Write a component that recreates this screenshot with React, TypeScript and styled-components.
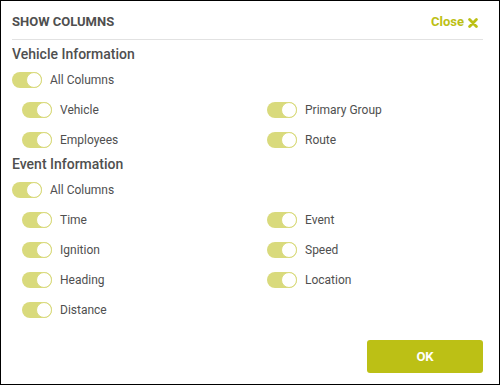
import React from "react";
import styled, { createGlobalStyle } from "styled-components";

const Global = createGlobalStyle`
  html, body { margin: 0; padding: 0; background: #fff; }
  body { font-family: Roboto, "Liberation Sans", Arial, sans-serif; }
  * { box-sizing: border-box; }
`;

const ACCENT = "#bcc015";
const TRACK = "#d9da7c";
const TEXT = "#4f4f4f";

const Frame = styled.div`
  width: 500px;
  height: 385px;
  border: 1px solid #000;
  background: #fff;
  padding: 0 16px 0 11px;
  display: flex;
  flex-direction: column;
`;

const Header = styled.div`
  display: flex;
  align-items: center;
  justify-content: space-between;
  padding: 13px 0 9px 0;
  border-bottom: 1px solid #e2e2e2;
  margin-bottom: 5px;
`;

const Title = styled.div`
  font-size: 13px;
  line-height: 16px;
  font-weight: 700;
  color: ${TEXT};
`;

const CloseButton = styled.button`
  border: none;
  background: none;
  padding: 0 5px 0 0;
  margin: 0;
  display: flex;
  align-items: center;
  gap: 4px;
  font-family: inherit;
  font-size: 13px;
  line-height: 16px;
  font-weight: 700;
  color: ${ACCENT};
  cursor: pointer;
`;

const CloseIcon = styled.svg`
  width: 10px;
  height: 10px;
  margin-top: 1px;
`;

const SectionTitle = styled.div`
  font-size: 14px;
  line-height: 18px;
  font-weight: 500;
  color: ${TEXT};
  margin-bottom: 2px;
`;

const Row = styled.div<{ $indent?: boolean }>`
  display: flex;
  align-items: center;
  gap: 8px;
  height: 30px;
  padding-left: ${(p) => (p.$indent ? "10px" : "0")};
`;

const Grid = styled.div`
  display: grid;
  grid-template-columns: 245px 1fr;
`;

const Track = styled.span`
  position: relative;
  width: 30px;
  height: 16px;
  border-radius: 8px;
  background: ${TRACK};
  flex: none;
`;

const Knob = styled.span`
  position: absolute;
  right: 0;
  top: 0;
  width: 16px;
  height: 16px;
  border-radius: 50%;
  background: #fff;
  border: 1.5px solid ${TRACK};
`;

const Label = styled.span`
  font-size: 12px;
  line-height: 14px;
  color: ${TEXT};
`;

const Footer = styled.div`
  margin-top: auto;
  display: flex;
  justify-content: flex-end;
  padding-bottom: 11px;
`;

const OkButton = styled.button`
  width: 116px;
  height: 33px;
  border: none;
  border-radius: 3px;
  background: ${ACCENT};
  color: #fff;
  font-family: inherit;
  font-size: 13px;
  font-weight: 700;
  cursor: pointer;
`;

const Toggle = () => (
  <Track>
    <Knob />
  </Track>
);

const Item = ({ label, indent }: { label: string; indent?: boolean }) => (
  <Row $indent={indent}>
    <Toggle />
    <Label>{label}</Label>
  </Row>
);

const Section = ({ title, items }: { title: string; items: string[] }) => (
  <>
    <SectionTitle>{title}</SectionTitle>
    <Item label="All Columns" />
    <Grid>
      {items.map((i) => (
        <Item key={i} label={i} indent />
      ))}
    </Grid>
  </>
);

export default function App() {
  return (
    <>
      <Global />
      <Frame>
        <Header>
          <Title>SHOW COLUMNS</Title>
          <CloseButton>
            Close
            <CloseIcon viewBox="0 0 10 10">
              <path
                d="M1.6 1.6 L8.4 8.4 M8.4 1.6 L1.6 8.4"
                stroke={ACCENT}
                strokeWidth="2.8"
                strokeLinecap="round"
                fill="none"
              />
            </CloseIcon>
          </CloseButton>
        </Header>
        <Section
          title="Vehicle Information"
          items={["Vehicle", "Primary Group", "Employees", "Route"]}
        />
        <Section
          title="Event Information"
          items={["Time", "Event", "Ignition", "Speed", "Heading", "Location", "Distance"]}
        />
        <Footer>
          <OkButton>OK</OkButton>
        </Footer>
      </Frame>
    </>
  );
}
